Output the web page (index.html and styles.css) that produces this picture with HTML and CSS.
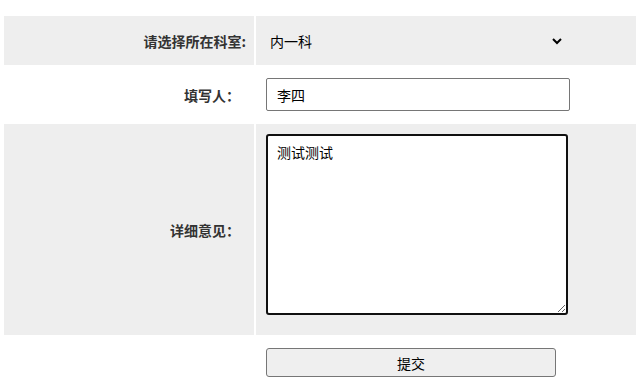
FILE: index.html
```html
<!DOCTYPE html>
<html lang="zh-CN">
<head>
<meta charset="utf-8">
<title>意见反馈</title>
<link rel="stylesheet" href="styles.css">
</head>
<body>
<form class="form">
  <table class="form-table">
    <tr class="row row-gray row-select">
      <td class="label">请选择所在科室:</td>
      <td class="field">
        <select class="select">
          <option>内一科</option>
          <option>内二科</option>
          <option>外一科</option>
        </select>
      </td>
    </tr>
    <tr class="row row-input">
      <td class="label label-wide">填写人：</td>
      <td class="field"><input class="input" type="text" value="李四"></td>
    </tr>
    <tr class="row row-gray row-area">
      <td class="label label-wide">详细意见：</td>
      <td class="field"><textarea class="textarea">测试测试</textarea></td>
    </tr>
    <tr class="row row-submit">
      <td class="label"></td>
      <td class="field"><button class="button" type="button">提交</button></td>
    </tr>
  </table>
</form>
</body>
</html>
```

FILE: styles.css
```css
html, body {
  margin: 0;
  padding: 0;
  background: #fff;
}

body {
  font-family: "Noto Sans CJK SC", "Noto Sans", sans-serif;
  font-size: 14px;
  color: #000;
}

.form {
  margin: 0;
  padding: 14px 2px 0;
}

.form-table {
  width: 636px;
  border-collapse: separate;
  border-spacing: 2px;
  table-layout: fixed;
}

.row-gray .label,
.row-gray .field {
  background: #eeeeee;
}

.label {
  box-sizing: border-box;
  width: 250px;
  padding: 0 8px 0 0;
  text-align: right;
  font-weight: bold;
  color: #333;
  vertical-align: middle;
  line-height: 20px;
}

.label-wide {
  padding-right: 14px;
}

.field {
  box-sizing: border-box;
  padding: 0 0 0 10px;
  vertical-align: middle;
}

.row-select .field {
  height: 49px;
}

.row-input .field {
  height: 55px;
}

.row-area .field {
  height: 211px;
}

.row-submit .field {
  height: 51px;
  vertical-align: top;
  padding-top: 11px;
}

.select {
  width: 299px;
  height: 30px;
  border: none;
  background: transparent;
  font-family: inherit;
  font-size: 14px;
  color: #000;
  padding: 0;
  margin: 0;
  display: block;
  outline: none;
}

.input {
  display: block;
  box-sizing: border-box;
  width: 304px;
  height: 33px;
  margin: 0;
  padding: 0 10px;
  border: 1px solid #767676;
  border-radius: 2px;
  font-family: inherit;
  font-size: 14px;
  color: #000;
  background: #fff;
}

.textarea {
  display: block;
  box-sizing: border-box;
  width: 302px;
  height: 181px;
  margin: 0 0 10px;
  padding: 6px 9px;
  border: 2px solid #101010;
  border-radius: 3px;
  font-family: inherit;
  font-size: 14px;
  line-height: 20px;
  color: #000;
  background: #fff;
  outline: none;
}

.button {
  display: block;
  box-sizing: border-box;
  width: 290px;
  height: 29px;
  margin: 0;
  padding: 0;
  border: 1px solid #767676;
  border-radius: 3px;
  background: #efefef;
  font-family: inherit;
  font-size: 14px;
  color: #000;
}
```
